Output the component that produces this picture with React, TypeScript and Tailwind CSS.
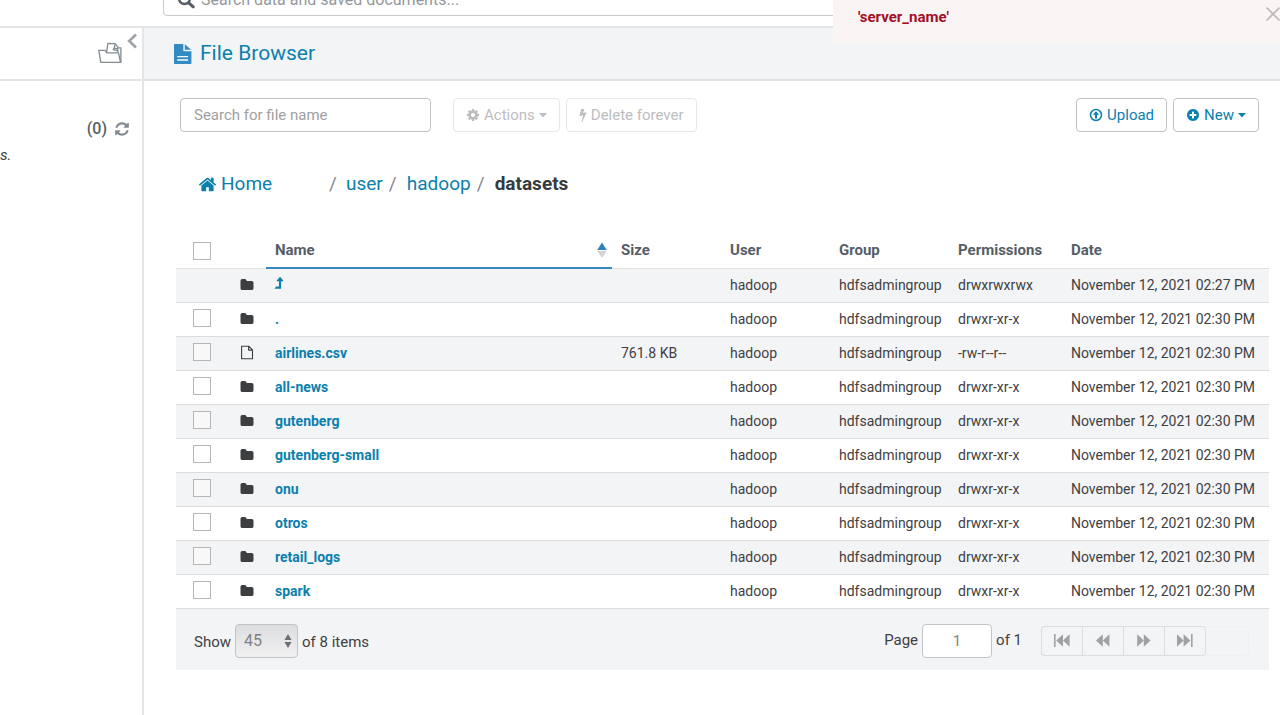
import type { ReactNode } from "react";

const ICONS = {
  refresh:
    "M1639 1056q0 5-1 7-64 268-268 434.5t-478 166.5q-146 0-282.5-55t-243.5-157l-129 129q-19 19-45 19t-45-19-19-45v-448q0-26 19-45t45-19h448q26 0 45 19t19 45-19 45l-137 137q71 66 161 102t187 36q134 0 250-65t186-179q11-17 53-117 8-23 30-23h192q13 0 22.5 9.5t9.5 22.5zm25-800v448q0 26-19 45t-45 19h-448q-26 0-45-19t-19-45 19-45l138-138q-148-137-349-137-134 0-250 65t-186 179q-11 17-53 117-8 23-30 23h-199q-13 0-22.5-9.5t-9.5-22.5v-7q65-268 270-434.5t480-166.5q146 0 284 55.5t245 156.5l130-129q19-19 45-19t45 19 19 45z",
  home: "M1472 992v480q0 26-19 45t-45 19h-384v-384h-256v384h-384q-26 0-45-19t-19-45v-480q0-1 .5-3t.5-3l575-474 575 474q1 2 1 6zm223-69l-62 74q-8 9-21 11h-3q-13 0-21-7l-692-577-692 577q-12 8-24 7-13-2-21-11l-62-74q-8-10-7-23.5t11-21.5l719-599q32-26 76-26t76 26l244 204v-195q0-14 9-23t23-9h192q14 0 23 9t9 23v408l219 182q10 8 11 21.5t-7 23.5z",
  plus: "M1344 960v-128q0-26-19-45t-45-19h-256v-256q0-26-19-45t-45-19h-128q-26 0-45 19t-19 45v256h-256q-26 0-45 19t-19 45v128q0 26 19 45t45 19h256v256q0 26 19 45t45 19h128q26 0 45-19t19-45v-256h256q26 0 45-19t19-45zm320-64q0 209-103 385.5t-279.5 279.5-385.5 103-385.5-103-279.5-279.5-103-385.5 103-385.5 279.5-279.5 385.5-103 385.5 103 279.5 279.5 103 385.5z",
  cog: "M1152 896q0-106-75-181t-181-75-181 75-75 181 75 181 181 75 181-75 75-181zm512-109v222q0 12-8 23t-20 13l-185 28q-19 54-39 91 35 50 107 138 10 12 10 25t-9 23q-27 37-99 108t-94 71q-12 0-26-9l-138-108q-44 23-91 38-16 136-29 186-7 28-36 28h-222q-14 0-24.5-8.5t-11.5-21.5l-28-184q-49-16-90-37l-141 107q-10 9-25 9-14 0-25-11-126-114-165-168-7-10-7-23 0-12 8-23 15-21 51-66.5t54-70.5q-27-50-41-99l-183-27q-13-2-21-12.5t-8-23.5v-222q0-12 8-23t19-13l186-28q14-46 39-92-40-57-107-138-10-12-10-24 0-10 9-23 26-36 98.5-107.5t94.5-71.5q13 0 26 10l138 107q44-23 91-38 16-136 29-186 7-28 36-28h222q14 0 24.5 8.5t11.5 21.5l28 184q49 16 90 37l142-107q9-9 24-9 13 0 25 10 129 119 165 170 7 8 7 22 0 12-8 23-15 21-51 66.5t-54 70.5q26 50 41 98l183 28q13 2 21 12.5t8 23.5z",
  folder:
    "M1728 608v704q0 92-66 158t-158 66h-1216q-92 0-158-66t-66-158v-960q0-92 66-158t158-66h320q92 0 158 66t66 158v32h672q92 0 158 66t66 158z",
  bolt: "M1333 566q18 20 7 44l-540 1157q-13 25-42 25-4 0-14-2-17-5-25.5-19t-4.5-30l197-808-406 101q-4 1-12 1-18 0-31-11-18-15-13-39l201-825q4-14 16-23t28-9h328q19 0 32 12.5t13 29.5q0 8-5 18l-171 463 396-98q8-2 12-2 19 0 34 15z",
  levelUp:
    "M1337 467q-18 37-58 37h-192v864q0 14-9 23t-23 9h-704q-21 0-29-18-8-20 4-35l160-192q9-11 25-11h320v-640h-192q-40 0-58-37-17-37 9-68l320-384q18-22 49-22t49 22l320 384q27 32 9 68z",
};

function Icon({ name, className }: { name: keyof typeof ICONS; className: string }) {
  return (
    <svg viewBox="0 0 1792 1792" fill="currentColor" className={className} aria-hidden="true">
      <path d={ICONS[name]} />
    </svg>
  );
}

function Caret() {
  return (
    <svg viewBox="0 0 8 5" className="h-[5px] w-2" fill="currentColor" aria-hidden="true">
      <path d="M0 0h8L4 4.6z" />
    </svg>
  );
}

function UploadIcon() {
  return (
    <svg viewBox="0 0 14 14" className="size-3.5" fill="none" stroke="currentColor" aria-hidden="true">
      <circle cx="7" cy="7" r="5.5" strokeWidth="1.5" />
      <path d="M7 3.2 10.2 6.8H8v3.6H6V6.8H3.8z" fill="currentColor" stroke="none" />
    </svg>
  );
}

function FileIcon() {
  return (
    <svg viewBox="0 0 14 15" className="h-[15px] w-3.5" fill="none" stroke="currentColor" aria-hidden="true">
      <path d="M1.6 1.2h7l3.9 3.7v8.9H1.6zM8.6 1.2v3.9h3.9" strokeWidth="1.1" strokeLinejoin="round" />
    </svg>
  );
}

function DocumentIcon() {
  return (
    <svg viewBox="0 0 18 20" className="h-5 w-[18px]" aria-hidden="true">
      <path fill="#338bc4" d="M1 0h8.3v6.2c0 .6.4 1 1 1h7.1V19c0 .6-.4 1-1 1H1c-.6 0-1-.4-1-1V1c0-.6.4-1 1-1z" />
      <path fill="#338bc4" d="M10.8.2 17.2 5.8h-6.4z" />
      <path stroke="#fff" strokeWidth="1.3" d="M3.2 12.6h10.9M3.2 16h10.9" />
    </svg>
  );
}

function OpenFolderIcon() {
  return (
    <svg
      viewBox="0 0 24 22"
      className="h-[22px] w-6"
      fill="none"
      stroke="#838b92"
      strokeWidth="1.3"
      strokeLinejoin="round"
      aria-hidden="true"
    >
      <path d="M2.8 20.3.8 8.4h6.4l1.6 2.4h11.7l2 9.5z" />
      <path d="M22.5 20.3h.4V5.8h-3.4" />
      <path d="m8.6 10.4 1.3-9 7.3.2 2.5 3.2.2 5.6" />
      <path d="m17.2 1.6-1 4.6 3.6.6M16.2 6.2l-1 1.4 4.6 1.2" />
    </svg>
  );
}

type Pager = "first" | "prev" | "next" | "last";

const PAGER_PATHS: Record<Pager, string> = {
  first: "M0 0h1.6v13H0zM9 .3v12.4L2.2 6.5zM15.6 .3v12.4L9 6.5z",
  prev: "M7.8 .3v12.4L1 6.5zM14.4 .3v12.4L7.8 6.5z",
  next: "M1.2 .3v12.4L7.8 6.5zM7.8 .3v12.4L14.6 6.5z",
  last: "M0 .3v12.4L6.6 6.5zM6.6 .3v12.4L13.4 6.5zM14 0h1.6v13H14z",
};

function PagerButton({ kind, label }: { kind: Pager; label: string }) {
  return (
    <button
      type="button"
      aria-label={label}
      disabled
      className="flex w-[41px] items-center justify-center border-r border-[#dcdddf] text-[#a0a1a3]"
    >
      <svg viewBox="0 0 16 13" className="h-[13px] w-4" fill="currentColor" aria-hidden="true">
        <path d={PAGER_PATHS[kind]} />
      </svg>
    </button>
  );
}

function Check({ label }: { label: string }) {
  return (
    <input
      type="checkbox"
      aria-label={label}
      className="block size-[18px] appearance-none border border-[#b4b6b8] bg-white/40 checked:bg-[#0b7fad]"
    />
  );
}

type Row = { name: string; size?: string; perms: string; time: string; file?: boolean; up?: boolean };

const ROWS: Row[] = [
  { name: "..", perms: "drwxrwxrwx", time: "02:27 PM", up: true },
  { name: ".", perms: "drwxr-xr-x", time: "02:30 PM" },
  { name: "airlines.csv", size: "761.8 KB", perms: "-rw-r--r--", time: "02:30 PM", file: true },
  { name: "all-news", perms: "drwxr-xr-x", time: "02:30 PM" },
  { name: "gutenberg", perms: "drwxr-xr-x", time: "02:30 PM" },
  { name: "gutenberg-small", perms: "drwxr-xr-x", time: "02:30 PM" },
  { name: "onu", perms: "drwxr-xr-x", time: "02:30 PM" },
  { name: "otros", perms: "drwxr-xr-x", time: "02:30 PM" },
  { name: "retail_logs", perms: "drwxr-xr-x", time: "02:30 PM" },
  { name: "spark", perms: "drwxr-xr-x", time: "02:30 PM" },
];

function Head({ children, className }: { children: ReactNode; className: string }) {
  return <th className={`border-b border-[#e0e1e3] px-[9px] text-left font-bold ${className}`}>{children}</th>;
}

function FileTable() {
  return (
    <table className="w-full table-fixed border-separate border-spacing-0 text-sm whitespace-nowrap text-[#3f4042]">
      <thead>
        <tr className="h-[35px] text-[15px] text-[#555e66]">
          <th className="w-[61px] border-b border-[#e0e1e3] pl-[17px]">
            <Check label="Select all" />
          </th>
          <th className="w-[29px] border-b border-[#e0e1e3]" aria-label="Type" />
          <th className="border-b-2 border-[#3a87be] pt-px pr-[5px] pl-[9px] text-left font-bold" aria-sort="ascending">
            <div className="flex items-center justify-between">
              Name
              <svg viewBox="0 0 10 17" className="h-[17px] w-2.5" aria-hidden="true">
                <path fill="#2f83bb" d="M5 .5 9.8 8H.2z" />
                <path fill="#d3d4d6" d="M.2 9h9.6L5 16z" />
              </svg>
            </div>
          </th>
          <Head className="w-[109px]">Size</Head>
          <Head className="w-[109px]">User</Head>
          <Head className="w-[119px]">Group</Head>
          <Head className="w-[113px]">Permissions</Head>
          <Head className="w-[207px]">Date</Head>
        </tr>
      </thead>
      <tbody>
        {ROWS.map((row) => (
          <tr
            key={row.name}
            className="h-[34px] odd:bg-[#f3f4f6] [&>td]:border-b [&>td]:border-[#dadcde] [&>td]:px-[9px] [&>td]:pb-0.5"
          >
            <td>
              <div className="pb-px pl-2">{!row.up && <Check label={`Select ${row.name}`} />}</div>
            </td>
            <td>
              <div className="-ml-1.5 w-3.5 text-[#3d3e40]">
                {row.file ? <FileIcon /> : <Icon name="folder" className="size-3.5" />}
              </div>
            </td>
            <td>
              <a href="#" className="font-bold text-[#0b7fad]" aria-label={row.up ? "Parent folder" : undefined}>
                {row.up ? <Icon name="levelUp" className="-ml-[3px] size-[15px]" /> : row.name}
              </a>
            </td>
            <td>{row.size}</td>
            <td>hadoop</td>
            <td>hdfsadmingroup</td>
            <td>{row.perms}</td>
            <td>November 12, 2021 {row.time}</td>
          </tr>
        ))}
      </tbody>
    </table>
  );
}

export default function App() {
  const button = "flex h-[34px] items-center gap-1 rounded border px-3 text-[15px]";
  return (
    <div className="relative flex min-h-screen flex-col overflow-hidden bg-white font-['Roboto',sans-serif] text-[#3f4042]">
      <header className="flex h-7 items-end overflow-hidden border-b-2 border-[#e4e5e7] pb-2.5 pl-[163px]">
        <label className="flex h-8 flex-1 shrink-0 items-center gap-1.5 rounded border border-[#c8cacc] px-[13px]">
          <svg viewBox="0 0 18 18" className="size-[18px]" fill="none" stroke="#555c63" aria-hidden="true">
            <circle cx="7.5" cy="7.5" r="5.5" strokeWidth="2.4" />
            <path d="m11.8 11.8 4.4 4" strokeWidth="3" strokeLinecap="round" />
          </svg>
          <input
            type="text"
            aria-label="Search data and saved documents"
            placeholder="Search data and saved documents..."
            className="min-w-0 flex-1 text-base outline-none placeholder:text-[#94989c]"
          />
        </label>
      </header>

      <div
        role="alert"
        className="absolute top-0 right-0 flex h-[43px] w-[447px] justify-between bg-[#fbf4f4] pt-1.5 pl-[25px] text-[15px] font-bold text-[#a01025]"
      >
        'server_name'
        <button type="button" aria-label="Close" className="-mr-px flex h-4 items-center">
          <svg viewBox="0 0 16 16" className="size-4" fill="none" stroke="#bcb9ba" strokeWidth="1.6" aria-hidden="true">
            <path d="m1.5 1.5 13 13m0-13-13 13" />
          </svg>
        </button>
      </div>

      <div className="flex flex-1">
        <aside className="w-36 shrink-0 border-r-2 border-[#e4e5e7]">
          <div className="flex h-[53px] justify-end gap-[5px] border-b-2 border-[#e4e5e7] pr-[5px]">
            <button type="button" aria-label="Browse documents" className="flex pt-3.5">
              <OpenFolderIcon />
            </button>
            <button type="button" aria-label="Collapse panel" className="flex pt-[5px]">
              <svg viewBox="0 0 10 16" className="h-4 w-2.5" fill="none" stroke="#a1a5aa" strokeWidth="2.8" aria-hidden="true">
                <path d="M9 1.5 2.2 8 9 14.5" />
              </svg>
            </button>
          </div>
          <div className="mt-[38px] flex items-center justify-end gap-[7px] pr-3 text-base leading-5 font-medium text-[#555e66]">
            (0)
            <button type="button" aria-label="Refresh" className="text-[#838b92]">
              <Icon name="refresh" className="size-4" />
            </button>
          </div>
          <p className="mt-1.5 text-[15px] leading-5 italic">s.</p>
        </aside>

        <main className="min-w-0 flex-1">
          <div className="flex h-[53px] items-center gap-2 border-b-2 border-[#e0e1e3] bg-[#f3f4f6] pl-[30px]">
            <DocumentIcon />
            <h1 className="text-[21px] text-[#0b7fad]">File Browser</h1>
          </div>

          <div className="pr-[11px] pl-8">
            <div className="flex items-center justify-between pt-[17px] pr-2.5 pl-1">
              <div className="flex items-center gap-1.5">
                <input
                  type="text"
                  aria-label="Search for file name"
                  placeholder="Search for file name"
                  className="mr-4 h-[34px] w-[251px] rounded border border-[#bfc1c3] px-[13px] text-[15px] outline-none placeholder:text-[#a0a0a0]"
                />
                <button type="button" disabled className={`${button} border-[#e6e7e8] text-[#bcbdbf]`}>
                  <Icon name="cog" className="size-3.5" />
                  Actions
                  <Caret />
                </button>
                <button type="button" disabled className={`${button} border-[#e6e7e8] text-[#bcbdbf]`}>
                  <Icon name="bolt" className="-mx-[3px] size-3.5" />
                  Delete forever
                </button>
              </div>
              <div className="flex items-center gap-1.5">
                <button type="button" className={`${button} border-[#bfc1c3] text-[#0b7fad]`}>
                  <UploadIcon />
                  Upload
                </button>
                <button type="button" className={`${button} border-[#bfc1c3] text-[#0b7fad]`}>
                  <Icon name="plus" className="size-3.5" />
                  New
                  <Caret />
                </button>
              </div>
            </div>

            <nav aria-label="Breadcrumb" className="flex pt-10 pl-[22px] text-[19px] leading-6 text-[#0b7fad]">
              <a href="#" className="flex w-[131px] items-center gap-1">
                <Icon name="home" className="size-[19px]" />
                Home
              </a>
              <span className="w-[17px] text-[#85898d]">/</span>
              <a href="#">user</a>
              <span className="w-6 pl-1.5 text-[#85898d]">/</span>
              <a href="#">hadoop</a>
              <span className="w-6 pl-1.5 text-[#85898d]">/</span>
              <strong className="font-bold text-[#343a40]">datasets</strong>
            </nav>

            <div className="pt-[38px]">
              <FileTable />
            </div>

            <footer className="flex h-[61px] items-center justify-between bg-[#f3f4f6] pt-0.5 pr-5 pl-[18px] text-[15px]">
              <div className="flex items-center gap-1">
                <label htmlFor="page-size" className="pt-1">
                  Show
                </label>
                <div className="relative flex">
                  <select
                    id="page-size"
                    className="h-[34px] w-[63px] appearance-none rounded border border-[#c3c4c6] bg-linear-to-b from-[#dcdddf] to-[#f1f1f2] pl-2 text-base text-[#808182]"
                  >
                    <option>45</option>
                  </select>
                  <svg
                    viewBox="0 0 8 14"
                    className="pointer-events-none absolute top-2.5 right-1.5 h-3.5 w-2"
                    fill="#6d6e70"
                    aria-hidden="true"
                  >
                    <path d="m4 0 3.5 6h-7zM.5 8h7L4 14z" />
                  </svg>
                </div>
                <span className="pt-1">of 8 items</span>
              </div>
              <div className="flex items-center gap-1">
                <label htmlFor="page-number">Page</label>
                <input
                  id="page-number"
                  type="text"
                  defaultValue="1"
                  className="h-[34px] w-[70px] rounded border border-[#c3c4c6] bg-white text-center text-[#808182] outline-none"
                />
                <span>of 1</span>
                <div className="ml-[15px] flex h-[30px] w-[208px] rounded border border-[#eff0f1]">
                  <div className="-my-px -ml-px flex rounded border border-r-0 border-[#dcdddf] [&>button:last-child]:rounded-r">
                    <PagerButton kind="first" label="First page" />
                    <PagerButton kind="prev" label="Previous page" />
                    <PagerButton kind="next" label="Next page" />
                    <PagerButton kind="last" label="Last page" />
                  </div>
                </div>
              </div>
            </footer>
          </div>
        </main>
      </div>
    </div>
  );
}
